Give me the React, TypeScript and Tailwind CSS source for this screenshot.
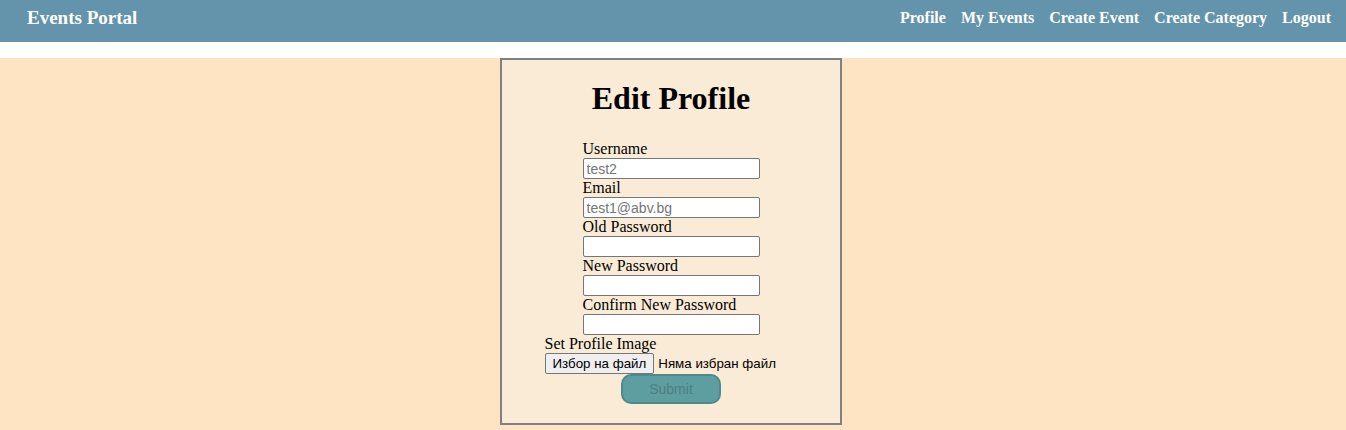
export default function App() {
  const fields = [
    { label: "Username", placeholder: "test2" },
    { label: "Email", placeholder: "test1@abv.bg" },
    { label: "Old Password", placeholder: "" },
    { label: "New Password", placeholder: "" },
    { label: "Confirm New Password", placeholder: "" },
  ];

  return (
    <div className="min-h-[430px] bg-white font-['Liberation_Serif',serif] text-black">
      <nav className="h-[42px] bg-[#6494ab] flex items-start justify-between pl-[27px] pr-[15px] pt-[7px] text-white font-bold">
        <span className="text-[19px] leading-[22px]">Events Portal</span>
        <ul className="flex gap-[15px] text-[16px] leading-[22px]">
          <li>Profile</li>
          <li>My Events</li>
          <li>Create Event</li>
          <li>Create Category</li>
          <li>Logout</li>
        </ul>
      </nav>

      <main className="mt-[16px] bg-[#ffe4c4] min-h-[372px] flex justify-center pr-[4px]">
        <div className="w-[342px] h-[367px] border-2 border-[#808080] bg-[#faebd7] flex flex-col items-center pt-[20px]">
          <h1 className="text-[32px] font-bold leading-[37px] mb-[23px]">Edit Profile</h1>

          <form className="flex flex-col items-center text-[16px] leading-[18px]">
            <div className="flex flex-col">
              {fields.map((f) => (
                <div key={f.label} className="flex flex-col">
                  <label>{f.label}</label>
                  <input
                    type={f.label.includes("Password") ? "password" : "text"}
                    placeholder={f.placeholder}
                    className="w-[177px] h-[21px] bg-white border border-[#767676] rounded-[2px] px-[3px] text-[14px] font-['Liberation_Sans',sans-serif] placeholder:text-[#757575]"
                  />
                </div>
              ))}
            </div>

            <div className="flex flex-col w-[253px]">
              <label>Set Profile Image</label>
              <div className="flex items-center gap-[4px] h-[21px] text-[13.33px] font-['Liberation_Sans',sans-serif]">
                <button
                  type="button"
                  className="h-[21px] px-[7px] bg-[#efefef] border border-[#767676] rounded-[2px] leading-none"
                >
                  Избор на файл
                </button>
                <span>Няма избран файл</span>
              </div>
            </div>

            <button
              type="button"
              className="w-[100px] h-[30px] rounded-[10px] bg-[#5f9ea0] border-2 border-[#4e8a8c] text-[#4a8083] text-[14px] font-['Liberation_Sans',sans-serif]"
            >
              Submit
            </button>
          </form>
        </div>
      </main>
    </div>
  );
}
